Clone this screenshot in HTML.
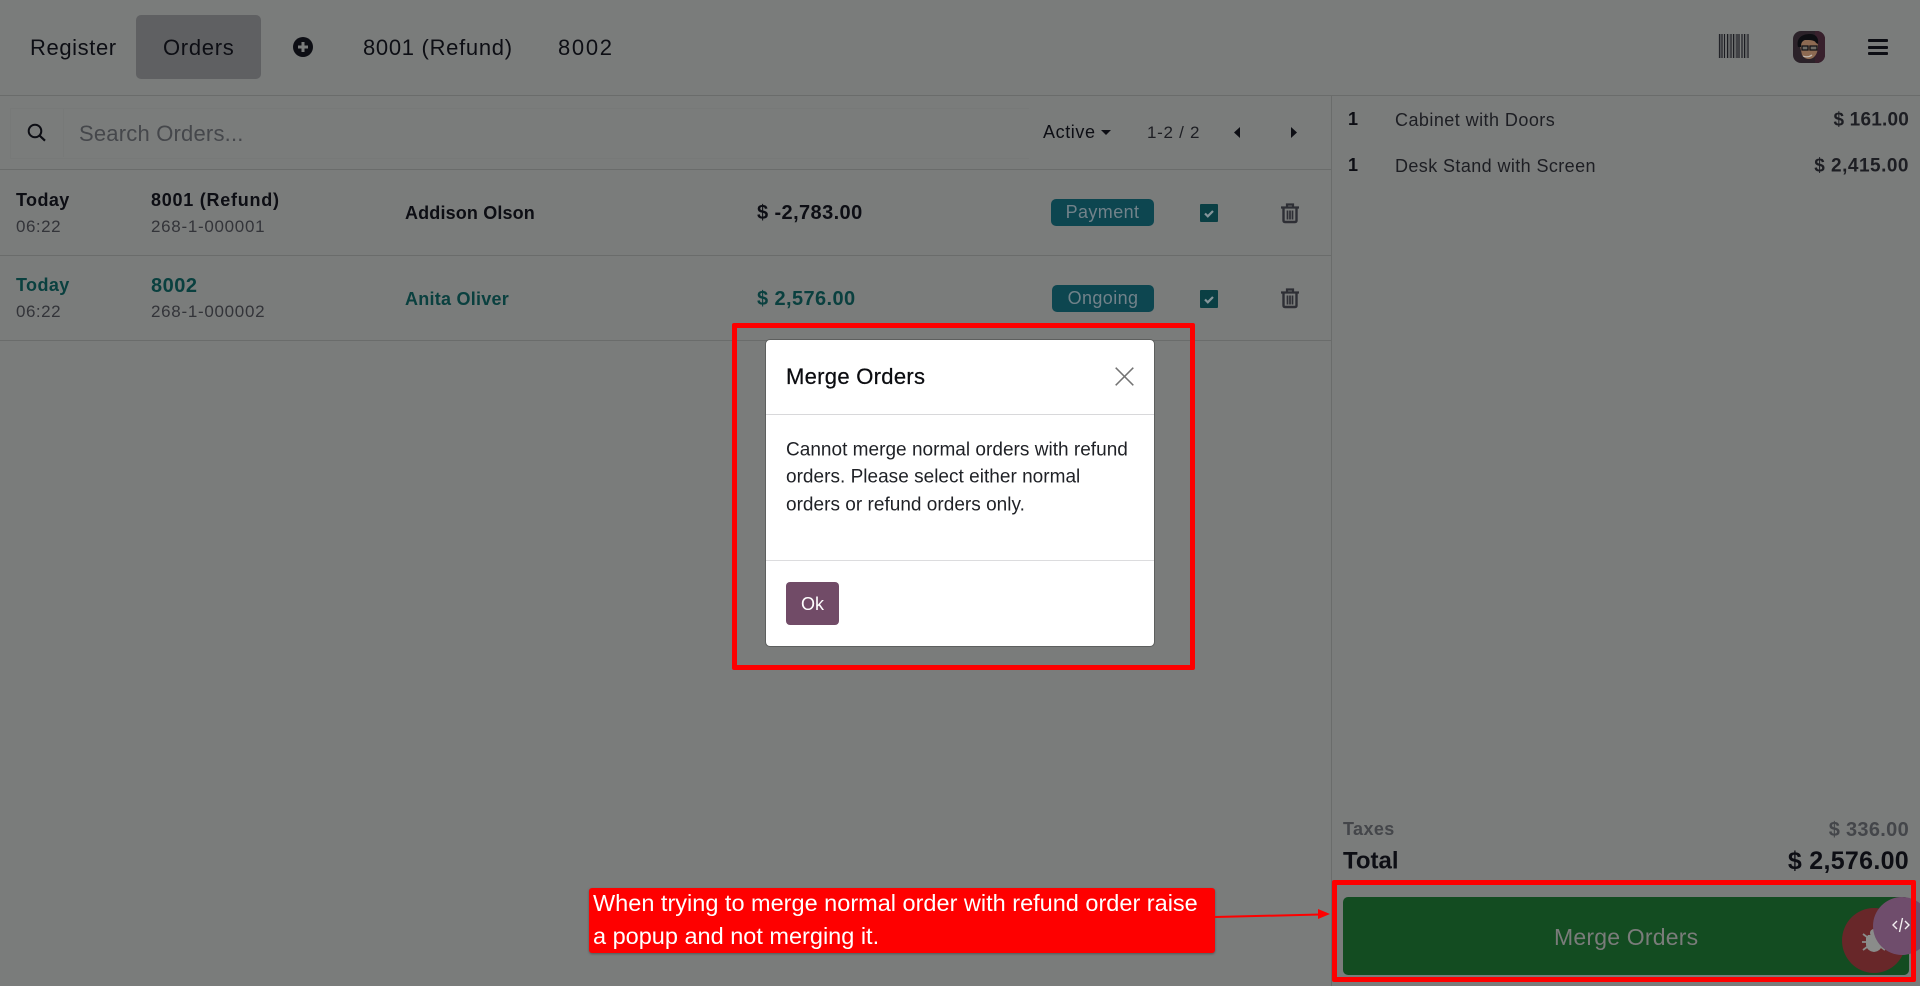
<!DOCTYPE html>
<html><head><meta charset="utf-8">
<style>
html,body{margin:0;padding:0;width:1920px;height:986px;overflow:hidden;background:#7a7c7b;font-family:"Liberation Sans",sans-serif;color:#0d0e14}
.t{position:absolute;white-space:nowrap;transform:translateY(-50%);line-height:1.2}
.r{transform:translate(-100%,-50%)}
.b{font-weight:bold}
.l{position:absolute;background:#6a6c6b}
.teal{color:#0a403f}
.g{color:#333439}
.bd{position:absolute;background:#0d4650;border-radius:5px;color:#72828a;font-size:18px;text-align:center}
svg{position:absolute;overflow:visible}
</style></head><body>
<div class="l" style="left:0;top:95px;width:1920px;height:1px"></div>
<div class="l" style="left:0;top:169px;width:1331px;height:1px"></div>
<div class="l" style="left:0;top:255px;width:1331px;height:1px"></div>
<div class="l" style="left:0;top:340px;width:1331px;height:1px"></div>
<div class="l" style="left:1331px;top:96px;width:1px;height:890px"></div>

<div class="t" style="left:30px;top:48px;font-size:22px;letter-spacing:.6px">Register</div>
<div style="position:absolute;left:136px;top:15px;width:125px;height:64px;background:#5f6062;border-radius:5px"></div>
<div class="t" style="left:163px;top:48px;font-size:22px;letter-spacing:.7px">Orders</div>
<svg style="left:293px;top:37px" width="20" height="20" viewBox="0 0 20 20"><circle cx="10" cy="10" r="10" fill="#0d0e14"/><path d="M10 5v10M5 10h10" stroke="#7a7c7b" stroke-width="3"/></svg>
<div class="t" style="left:363px;top:48px;font-size:22px;letter-spacing:.7px">8001 (Refund)</div>
<div class="t" style="left:558px;top:48px;font-size:22px;letter-spacing:1.700px">8002</div>

<svg style="left:1719px;top:34px" width="31" height="24" viewBox="0 0 31 24"><path d="M.5 0v24M3 0v24M5.500 0v24M8.500 0v24M12 0v24M14.500 0v24M18 0v24M20 0v24M23 0v24M25.500 0v24M29 0v24" stroke="#1c1d22" stroke-width="1.200"/><path d="M1.500 0v24M10 0v24M16 0v24M27 0v24" stroke="#55575a" stroke-width="1.200"/></svg>
<svg style="left:1793px;top:31px" width="32" height="32" viewBox="0 0 32 32">
<rect width="32" height="32" rx="8" fill="#2b2229"/><path d="M22 0h2a8 8 0 0 1 8 8v16a8 8 0 0 1-8 8h-2z" fill="#38202c"/>
<path d="M7 15c0-5 4-8 9-8s9 3 9 8c0 8-4 13-9 13-3 0-5-1-7-4z" fill="#8d6a52"/>
<path d="M5 16C3 7 9 3 17 3c6 0 9 4 8 10l-2-1c-1-3-6-3-11-3-3 1-4 3-4 7z" fill="#0d0e12"/>
<path d="M9 15h6v4H9zM17 15h7v4h-7z" fill="#6d6a64" stroke="#131317" stroke-width="1.300"/><path d="M10 25q5 2 9-1" stroke="#c4bcb4" stroke-width="1.200" fill="none"/></svg>
<div style="position:absolute;left:1868px;top:39px;width:20px;height:3px;background:#0d0e14;border-radius:1px"></div>
<div style="position:absolute;left:1868px;top:45.500px;width:20px;height:3px;background:#0d0e14;border-radius:1px"></div>
<div style="position:absolute;left:1868px;top:52px;width:20px;height:3px;background:#0d0e14;border-radius:1px"></div>

<div style="position:absolute;left:10px;top:108px;width:1018px;height:49px;border:1px solid #777978;border-right:none"></div>
<div style="position:absolute;left:63px;top:108px;width:1px;height:49px;background:#777978"></div>
<svg style="left:27px;top:123px" width="19" height="19" viewBox="0 0 19 19"><circle cx="8" cy="8" r="6.300" fill="none" stroke="#0d0e14" stroke-width="2"/><path d="M12.500 12.500l5.500 5.200" stroke="#0d0e14" stroke-width="2.200"/></svg>
<div class="t" style="left:79px;top:134px;font-size:22px;color:#45474b;letter-spacing:.2px">Search Orders...</div>
<div class="t" style="left:1043px;top:133px;font-size:18px;letter-spacing:.6px">Active</div>
<svg style="left:1101px;top:130px" width="10" height="5"><path d="M0 0h10L5 5z" fill="#0d0e14"/></svg>
<div class="t" style="left:1147px;top:133px;font-size:17px;letter-spacing:.7px;color:#1d1e23">1-2 / 2</div>
<svg style="left:1234px;top:127px" width="6" height="11"><path d="M6 0v11L0 5.500z" fill="#0d0e14"/></svg>
<svg style="left:1291px;top:127px" width="6" height="11"><path d="M0 0v11l6-5.500z" fill="#0d0e14"/></svg>

<div class="t b" style="left:16px;top:201px;font-size:18px;letter-spacing:.4px">Today</div>
<div class="t g" style="left:16px;top:227px;font-size:17px;letter-spacing:.5px">06:22</div>
<div class="t b" style="left:151px;top:201px;font-size:18px;letter-spacing:.75px">8001 (Refund)</div>
<div class="t g" style="left:151px;top:227px;font-size:17px;letter-spacing:.7px">268-1-000001</div>
<div class="t b" style="left:405px;top:214px;font-size:18px;letter-spacing:.15px">Addison Olson</div>
<div class="t b" style="left:757px;top:213px;font-size:20px;letter-spacing:.4px">$ -2,783.00</div>
<div class="bd" style="left:1051px;top:199px;width:103px;height:27px;line-height:27px;letter-spacing:.4px">Payment</div>
<svg style="left:1200px;top:204px" width="18" height="18"><rect width="18" height="18" rx="1" fill="#0a3f44"/><path d="M5 9.500l2.800 2.800 5.200-5.300" stroke="#85959a" stroke-width="2.200" fill="none"/></svg>
<svg style="left:1281px;top:203px" width="18" height="20" viewBox="0 0 18 20"><path d="M0 4.500h18M6 4V1.500h6V4" stroke="#2e2f35" stroke-width="2.200" fill="none"/><path d="M2.500 5v12.500q0 1.500 1.500 1.500h10q1.500 0 1.500-1.500V5" stroke="#2e2f35" stroke-width="2.400" fill="none"/><path d="M6.500 7.500v9M9 7.500v9M11.500 7.500v9" stroke="#2e2f35" stroke-width="1.700"/></svg>

<div class="t b teal" style="left:16px;top:286px;font-size:18px;letter-spacing:.4px">Today</div>
<div class="t g" style="left:16px;top:312px;font-size:17px;letter-spacing:.5px">06:22</div>
<div class="t b teal" style="left:151px;top:286px;font-size:20px;letter-spacing:.5px">8002</div>
<div class="t g" style="left:151px;top:312px;font-size:17px;letter-spacing:.7px">268-1-000002</div>
<div class="t b teal" style="left:405px;top:299.500px;font-size:18px;letter-spacing:.25px">Anita Oliver</div>
<div class="t b teal" style="left:757px;top:299px;font-size:20px;letter-spacing:.4px">$ 2,576.00</div>
<div class="bd" style="left:1052px;top:285px;width:102px;height:27px;line-height:27px;letter-spacing:.4px">Ongoing</div>
<svg style="left:1200px;top:290px" width="18" height="18"><rect width="18" height="18" rx="1" fill="#0a3f44"/><path d="M5 9.500l2.800 2.800 5.200-5.300" stroke="#85959a" stroke-width="2.200" fill="none"/></svg>
<svg style="left:1281px;top:288px" width="18" height="20" viewBox="0 0 18 20"><path d="M0 4.500h18M6 4V1.500h6V4" stroke="#2e2f35" stroke-width="2.200" fill="none"/><path d="M2.500 5v12.500q0 1.500 1.500 1.500h10q1.500 0 1.500-1.500V5" stroke="#2e2f35" stroke-width="2.400" fill="none"/><path d="M6.500 7.500v9M9 7.500v9M11.500 7.500v9" stroke="#2e2f35" stroke-width="1.700"/></svg>

<div class="t b" style="left:1348px;top:120px;font-size:18px">1</div>
<div class="t" style="left:1395px;top:121px;font-size:18px;letter-spacing:.45px;color:#1d1e23">Cabinet with Doors</div>
<div class="t b r" style="left:1909px;top:121px;font-size:19px;letter-spacing:.2px;color:#1d1e23">$ 161.00</div>
<div class="t b" style="left:1348px;top:166px;font-size:18px">1</div>
<div class="t" style="left:1395px;top:167px;font-size:18px;letter-spacing:.4px;color:#1d1e23">Desk Stand with Screen</div>
<div class="t b r" style="left:1909px;top:167px;font-size:19px;letter-spacing:.5px;color:#1d1e23">$ 2,415.00</div>
<div class="t b" style="left:1343px;top:830px;font-size:18px;letter-spacing:.4px;color:#44464a">Taxes</div>
<div class="t b r" style="left:1909px;top:829.500px;font-size:20px;letter-spacing:.3px;color:#44464a">$ 336.00</div>
<div class="t b" style="left:1343px;top:862px;font-size:24px">Total</div>
<div class="t b r" style="left:1909px;top:861px;font-size:25px;letter-spacing:.3px">$ 2,576.00</div>

<div style="position:absolute;left:1343px;top:897px;width:566px;height:78px;background:#134c21;border-radius:5px"></div>
<div class="t" style="left:1554px;top:938px;font-size:23px;color:#7a7c7a;letter-spacing:.2px">Merge Orders</div>
<div style="position:absolute;left:1842px;top:908px;width:64px;height:65px;border-radius:50%;background:#682729"></div>
<svg style="left:1862px;top:929px" width="24" height="24" viewBox="0 0 24 24"><path d="M6 6h12l2 3v7q-1 6-8 7-7-1-8-7V9z" fill="#8a8c8a"/><circle cx="12" cy="4" r="4" fill="#8a8c8a"/><path d="M5 8L1 5M4 13H0M5 18l-4 3M19 8l4-3M20 13h4M19 18l4 3" stroke="#8a8c8a" stroke-width="1.800"/></svg>
<div style="position:absolute;left:1873px;top:897px;width:58px;height:58px;border-radius:50%;background:#6f4d6c"></div>
<svg style="left:1892px;top:918px" width="18" height="14" viewBox="0 0 18 14"><path d="M5 3L1 7l4 4M13 3l4 4-4 4M10.500 0L7.500 14" stroke="#f2eef1" stroke-width="1.400" fill="none"/></svg>

<div style="position:absolute;left:1332px;top:880px;width:574px;height:92px;border:5px solid #fe0000;border-radius:2px"></div>

<div style="position:absolute;left:732px;top:323px;width:453px;height:337px;border:5px solid #fe0000;border-radius:2px"></div>
<div style="position:absolute;left:765px;top:339px;width:390px;height:308px;background:#fff;border:1px solid #5d5f5e;box-sizing:border-box;border-radius:5px"></div>
<div class="t" style="left:786px;top:377px;font-size:22px;letter-spacing:.3px;color:#0b0c10;-webkit-text-stroke:.25px #0b0c10">Merge Orders</div>
<svg style="left:1115px;top:367px" width="19" height="19"><path d="M.7.7l17.600 17.600M18.300.7L.7 18.300" stroke="#737373" stroke-width="1.500"/></svg>
<div style="position:absolute;left:766px;top:414px;width:388px;height:1px;background:#d8d8da"></div>
<div style="position:absolute;left:766px;top:560px;width:388px;height:1px;background:#dcdcde"></div>
<div class="t" style="left:786px;top:451px;font-size:19px;letter-spacing:.02px;color:#1f2126">Cannot merge normal orders with refund</div>
<div class="t" style="left:786px;top:478px;font-size:19px;letter-spacing:.02px;color:#1f2126">orders. Please select either normal</div>
<div class="t" style="left:786px;top:506px;font-size:19px;letter-spacing:.02px;color:#1f2126">orders or refund orders only.</div>
<div style="position:absolute;left:786px;top:582px;width:53px;height:43px;background:#714b67;border-radius:4px;color:#fff;font-size:18px;line-height:44px;text-align:center">Ok</div>

<div style="position:absolute;left:589px;top:888px;width:626px;height:65px;background:#fe0000;border-radius:3px;box-shadow:0 1px 2px #555"></div>
<div class="t" style="left:593px;top:903px;font-size:23.500px;color:#fff">When trying to merge normal order with refund order raise</div>
<div class="t" style="left:593px;top:936px;font-size:23.500px;color:#fff">a popup and not merging it.</div>
<svg style="left:1215px;top:905px" width="116" height="16"><path d="M0 12L105 9.500" stroke="#fe0000" stroke-width="2"/><path d="M103 4l12 5-12 5z" fill="#fe0000"/></svg>
</body></html>
